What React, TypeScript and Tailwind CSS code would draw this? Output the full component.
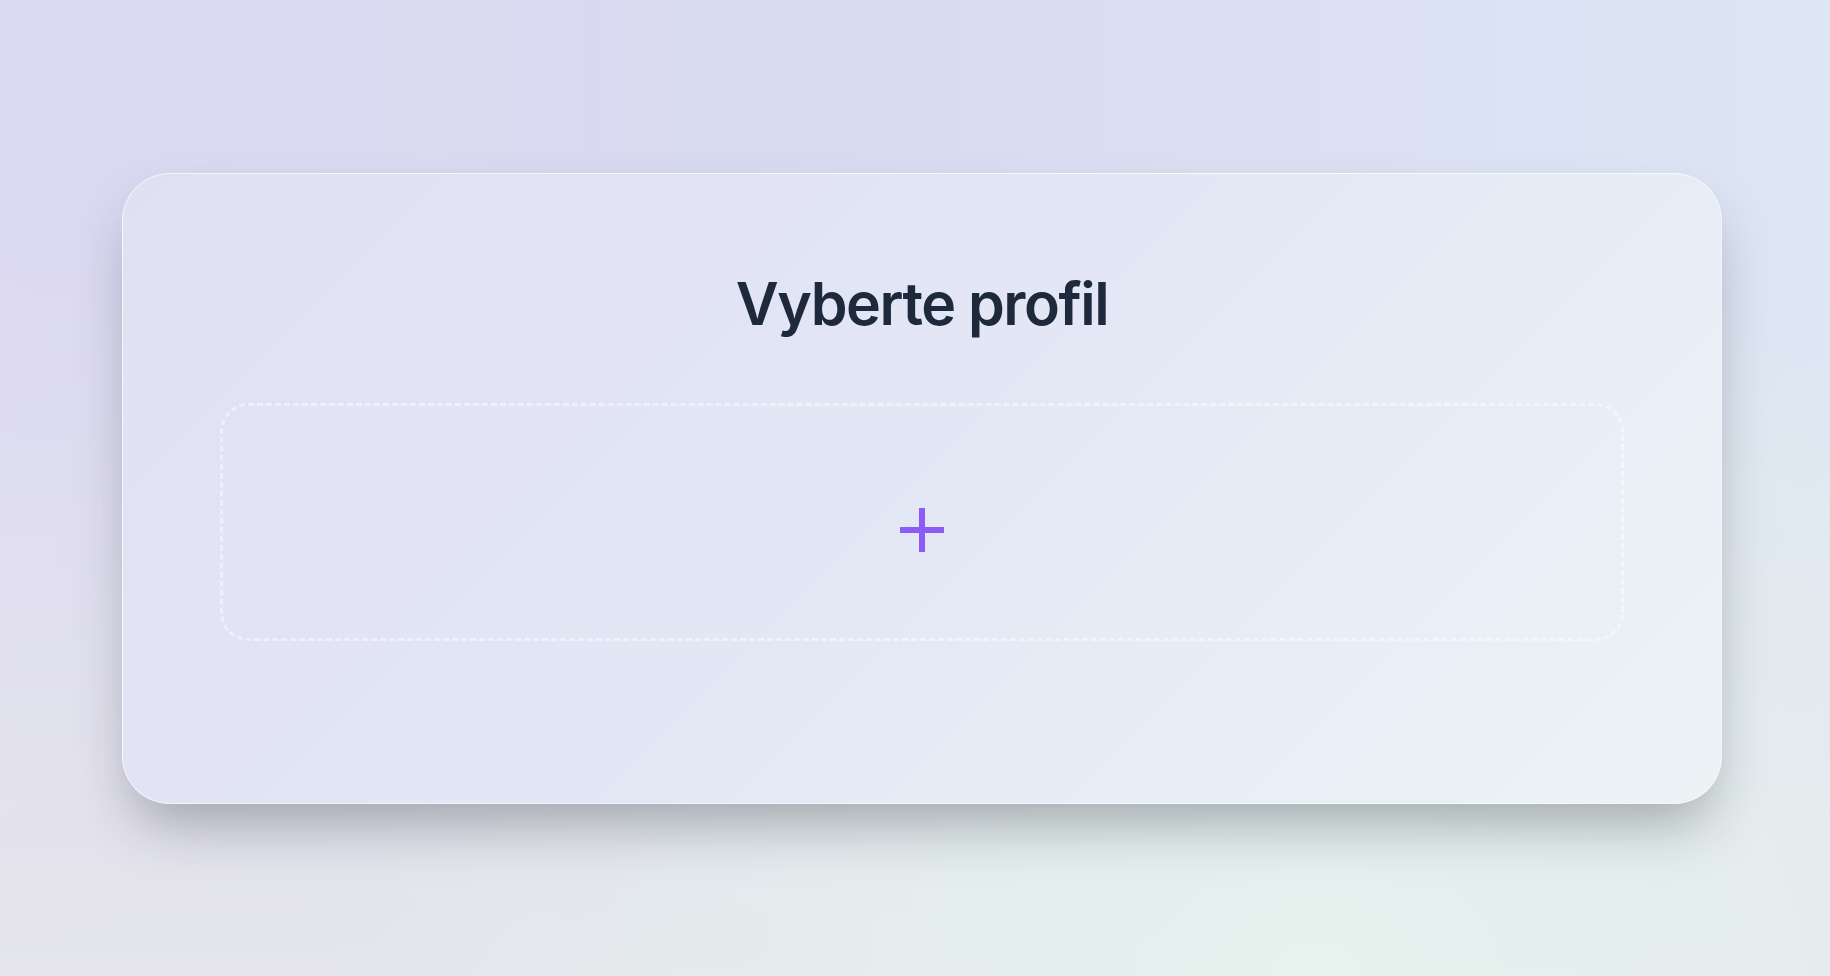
import React from "react";

const PlusMark: React.FC = () => (
  <svg width="44" height="44" viewBox="0 0 44 44" fill="none" aria-hidden="true">
    <rect x="19" y="0" width="6" height="44" fill="#8b5cf6" />
    <rect x="0" y="19" width="44" height="6" fill="#8b5cf6" />
  </svg>
);

export default function App() {
  return (
    <main
      className="min-h-screen w-full flex items-center justify-center pl-[14px] bg-[radial-gradient(ellipse_at_72%_100%,rgba(229,243,238,0.95)_0%,rgba(229,243,238,0)_55%),linear-gradient(to_bottom,rgba(230,230,236,0)_25%,rgba(230,230,235,0.92)_100%),linear-gradient(to_right,#dcd9f2_0%,#d8daf0_40%,#dde6f5_100%)]"
      style={{ fontFamily: "Inter, 'Noto Sans', sans-serif" }}
    >
      {/* Profile picker card */}
      <section className="relative w-[1600px] h-[631px] rounded-[48px] border border-white/60 bg-[linear-gradient(135deg,#e1e0f3_0%,#e2e6f5_45%,#e8eef6_75%,#ecf3f5_100%)] shadow-[0_30px_55px_-12px_rgba(30,35,45,0.34)] pt-[100px] px-[97px] flex flex-col items-center">
        <h1 className="text-[59px] leading-none font-semibold text-[#1e293b] tracking-[-0.025em]">
          Vyberte profil
        </h1>

        <button
          type="button"
          className="mt-[70px] w-full h-[238px] rounded-[28px] border-[3px] border-dashed border-white/45 flex items-center justify-center pt-[17px]"
        >
          <PlusMark />
        </button>
      </section>
    </main>
  );
}
